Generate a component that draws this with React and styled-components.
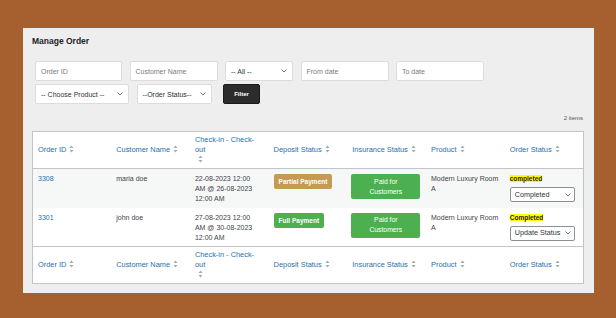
import styled, { createGlobalStyle } from 'styled-components';

const Global = createGlobalStyle`
  body {
    margin: 0;
    background: #a6602f;
    font-family: "Liberation Sans", Arial, sans-serif;
  }
`;

const Page = styled.div`
  padding: 28px 0 0 23px;
  height: 318px;
  box-sizing: border-box;
`;

const Panel = styled.div`
  width: 571px;
  height: 265px;
  background: #eeeeee;
  box-sizing: border-box;
  padding: 9px 10px 0 9px;
`;

const Title = styled.h1`
  margin: 0;
  font-size: 8.5px;
  font-weight: 700;
  color: #1d2327;
  line-height: 8px;
`;

const Filters = styled.div`
  display: flex;
  flex-direction: column;
  gap: 3px;
  margin: 16px 0 0 3px;
`;

const FilterRow = styled.div`
  display: flex;
  gap: 7.5px;
`;

const Field = styled.div`
  width: ${p => p.$w}px;
  height: 20px;
  box-sizing: border-box;
  background: #fff;
  border: 1px solid #dcdcde;
  border-radius: 2px;
  display: flex;
  align-items: center;
  justify-content: space-between;
  padding: 0 5px 0 5px;
  font-size: 7px;
  color: ${p => (p.$dark ? '#2c3338' : '#787c82')};
`;

const FilterButton = styled.button`
  margin-left: 4px;
  width: 37px;
  height: 20px;
  background: #2c2c2c;
  color: #fff;
  border: 1px solid #1a1a1a;
  border-radius: 2px;
  font-family: inherit;
  font-size: 6px;
  font-weight: 700;
  padding: 0;
`;

const Count = styled.div`
  text-align: right;
  font-size: 6px;
  color: #50575e;
  margin: 11px 0 0;
  padding-right: 1px;
`;

const Table = styled.table`
  width: 552px;
  margin-top: 10px;
  border-collapse: collapse;
  table-layout: fixed;
  background: #fff;
  border: 1px solid #c3c4c7;
`;

const HeadCell = styled.th`
  text-align: left;
  font-weight: 400;
  font-size: 7.4px;
  line-height: 10px;
  color: #2271b1;
  padding: 0 5px;
  height: 36px;
  vertical-align: middle;
  ${p => (p.$foot ? 'border-top: 1px solid #c3c4c7;' : 'border-bottom: 1px solid #c3c4c7;')}
`;

const Row = styled.tr`
  background: ${p => (p.$alt ? '#f6f7f7' : '#fff')};
`;

const Cell = styled.td`
  vertical-align: top;
  font-size: 7px;
  line-height: 10px;
  color: #3c434a;
  padding: 5px 5px 0;
  height: 39px;
  box-sizing: border-box;
`;

const LinkText = styled.span`
  color: #2271b1;
`;

const Badge = styled.div`
  display: inline-block;
  background: ${p => p.$color};
  color: #fff;
  font-size: 6.5px;
  font-weight: 700;
  line-height: 15px;
  height: 15px;
  padding: 0 5px;
  border-radius: 2px;
`;

const PaidBadge = styled.div`
  width: 69px;
  height: 25px;
  box-sizing: border-box;
  background: #4caf50;
  color: #fff;
  border-radius: 2px;
  font-size: 6.8px;
  line-height: 10px;
  padding-top: 2.5px;
  text-align: center;
  margin-left: -1px;
`;

const Highlight = styled.span`
  background: #ffff00;
  color: #1d2327;
  font-weight: 700;
  font-size: 6.5px;
  line-height: 7px;
  display: inline-block;
`;

const StatusSelect = styled.div`
  margin-top: 3px;
  width: 65px;
  height: 15px;
  box-sizing: border-box;
  border: 1px solid #8c8f94;
  border-radius: 2px;
  background: #fff;
  display: flex;
  align-items: center;
  justify-content: space-between;
  gap: 2px;
  padding: 0 3px 0 4px;
  font-size: 7.2px;
  color: #2c3338;
  white-space: nowrap;
`;

const SortWrap = styled.span`
  display: inline-block;
  vertical-align: middle;
  margin-left: 3px;
`;

const Sort = () => (
  <SortWrap>
    <svg width="5" height="8" viewBox="0 0 5 8">
      <path d="M2.5 0.5 L4.5 3 H0.5 Z M2.5 7.5 L4.5 5 H0.5 Z" fill="#a7aaad" />
    </svg>
  </SortWrap>
);

const Chevron = () => (
  <svg width="6" height="4" viewBox="0 0 6 4" style={{ flexShrink: 0 }}>
    <path d="M0.5 0.5 L3 3 L5.5 0.5" fill="none" stroke="#50575e" strokeWidth="0.8" />
  </svg>
);

const heads = [
  'Order ID',
  'Customer Name',
  'Check-in - Check-out',
  'Deposit Status',
  'Insurance Status',
  'Product',
  'Order Status',
];

const HeadRow = ({ foot }) => (
  <tr>
    {heads.map(h => (
      <HeadCell key={h} $foot={foot}>
        {h === 'Check-in - Check-out' ? (
          <>
            Check-in - Check-
            <br />
            out
            <br />
            <Sort />
          </>
        ) : (
          <>
            {h}
            <Sort />
          </>
        )}
      </HeadCell>
    ))}
  </tr>
);

const orders = [
  {
    id: '3308',
    name: 'maria doe',
    dates: ['22-08-2023 12:00', 'AM @ 26-08-2023', '12:00 AM'],
    deposit: 'Partial Payment',
    depositColor: '#c49a55',
    status: 'completed',
    select: 'Completed',
  },
  {
    id: '3301',
    name: 'john doe',
    dates: ['27-08-2023 12:00', 'AM @ 30-08-2023', '12:00 AM'],
    deposit: 'Full Payment',
    depositColor: '#4caf50',
    status: 'Completed',
    select: 'Update Status',
  },
];

export default function App() {
  return (
    <>
      <Global />
      <Page>
        <Panel>
          <Title>Manage Order</Title>
          <Filters>
            <FilterRow>
              <Field $w={87}>Order ID</Field>
              <Field $w={88}>Customer Name</Field>
              <Field $w={68} $dark>
                -- All --
                <Chevron />
              </Field>
              <Field $w={88}>From date</Field>
              <Field $w={88}>To date</Field>
            </FilterRow>
            <FilterRow>
              <Field $w={94} $dark>
                -- Choose Product --
                <Chevron />
              </Field>
              <Field $w={75} $dark>
                --Order Status--
                <Chevron />
              </Field>
              <FilterButton>Filter</FilterButton>
            </FilterRow>
          </Filters>
          <Count>2 items</Count>
          <Table>
            <thead>
              <HeadRow />
            </thead>
            <tbody>
              {orders.map((o, i) => (
                <Row key={o.id} $alt={i === 0}>
                  <Cell>
                    <LinkText>{o.id}</LinkText>
                  </Cell>
                  <Cell>{o.name}</Cell>
                  <Cell>
                    {o.dates.map(d => (
                      <div key={d}>{d}</div>
                    ))}
                  </Cell>
                  <Cell>
                    <Badge $color={o.depositColor}>{o.deposit}</Badge>
                  </Cell>
                  <Cell>
                    <PaidBadge>
                      Paid for
                      <br />
                      Customers
                    </PaidBadge>
                  </Cell>
                  <Cell>
                    Modern Luxury Room
                    <br />A
                  </Cell>
                  <Cell>
                    <Highlight>{o.status}</Highlight>
                    <StatusSelect>
                      {o.select}
                      <Chevron />
                    </StatusSelect>
                  </Cell>
                </Row>
              ))}
            </tbody>
            <tfoot>
              <HeadRow foot />
            </tfoot>
          </Table>
        </Panel>
      </Page>
    </>
  );
}
